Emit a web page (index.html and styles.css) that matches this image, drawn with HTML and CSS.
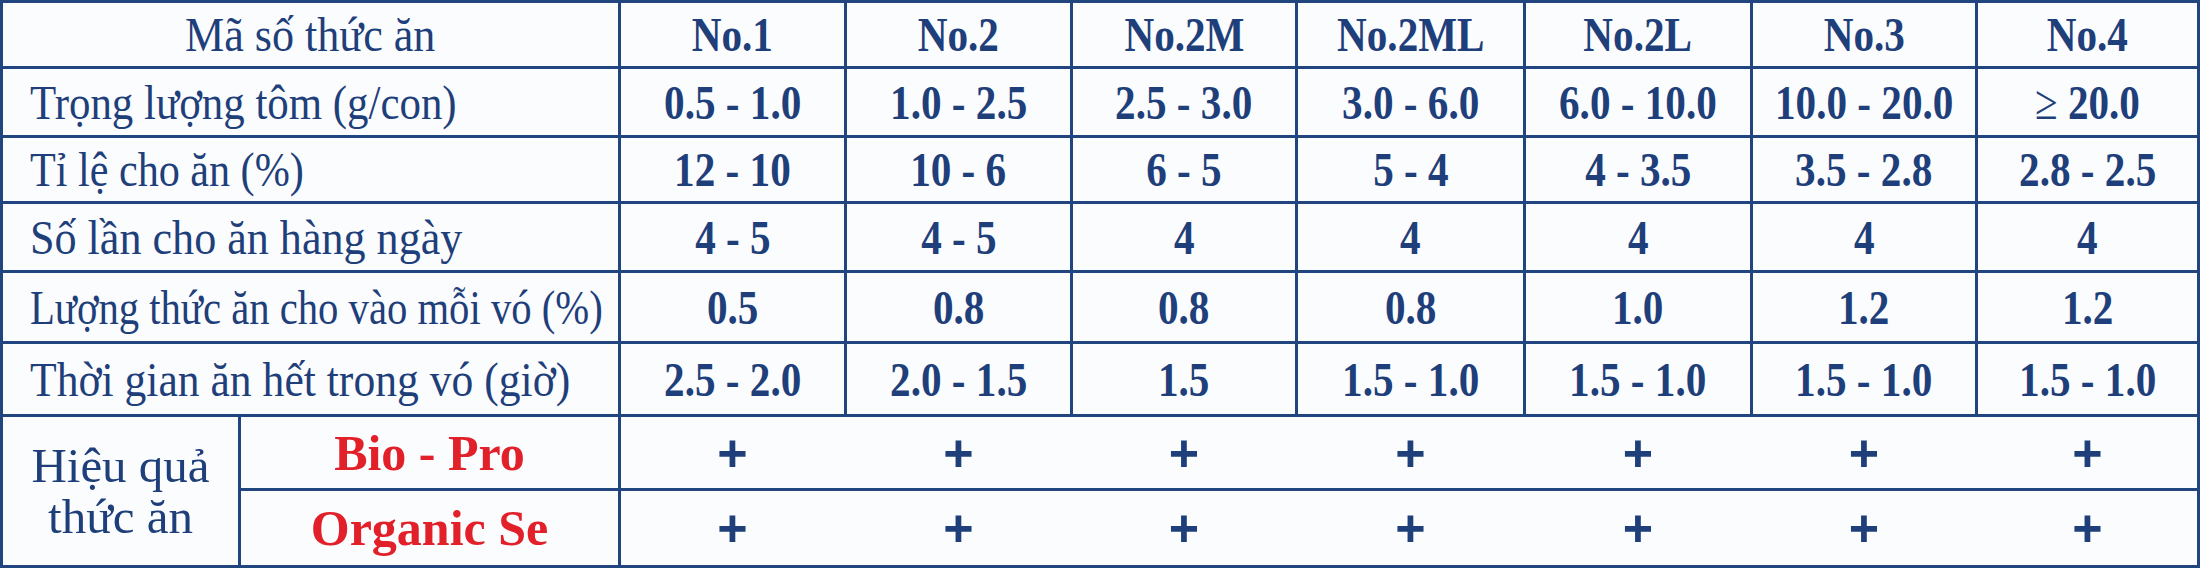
FILE: index.html
```html
<!DOCTYPE html>
<html lang="vi">
<head>
<meta charset="utf-8">
<title>Bảng cho ăn</title>
<link rel="stylesheet" href="styles.css">
</head>
<body>
<div class="feed-table">
  <div class="cell label head-label"><span class="sq s90">Mã số thức ăn</span></div>
  <div class="cell val"><span class="num">No.1</span></div>
  <div class="cell val"><span class="num">No.2</span></div>
  <div class="cell val"><span class="num">No.2M</span></div>
  <div class="cell val"><span class="num">No.2ML</span></div>
  <div class="cell val"><span class="num">No.2L</span></div>
  <div class="cell val"><span class="num">No.3</span></div>
  <div class="cell val"><span class="num">No.4</span></div>

  <div class="cell label"><span class="sq s87">Trọng lượng tôm (g/con)</span></div>
  <div class="cell val"><span class="num">0.5 - 1.0</span></div>
  <div class="cell val"><span class="num">1.0 - 2.5</span></div>
  <div class="cell val"><span class="num">2.5 - 3.0</span></div>
  <div class="cell val"><span class="num">3.0 - 6.0</span></div>
  <div class="cell val"><span class="num">6.0 - 10.0</span></div>
  <div class="cell val"><span class="num">10.0 - 20.0</span></div>
  <div class="cell val"><span class="num"><span class="ge">≥</span> 20.0</span></div>

  <div class="cell label"><span class="sq s86">Tỉ lệ cho ăn (%)</span></div>
  <div class="cell val"><span class="num">12 - 10</span></div>
  <div class="cell val"><span class="num">10 - 6</span></div>
  <div class="cell val"><span class="num">6 - 5</span></div>
  <div class="cell val"><span class="num">5 - 4</span></div>
  <div class="cell val"><span class="num">4 - 3.5</span></div>
  <div class="cell val"><span class="num">3.5 - 2.8</span></div>
  <div class="cell val"><span class="num">2.8 - 2.5</span></div>

  <div class="cell label"><span class="sq s90">Số lần cho ăn hàng ngày</span></div>
  <div class="cell val"><span class="num">4 - 5</span></div>
  <div class="cell val"><span class="num">4 - 5</span></div>
  <div class="cell val"><span class="num">4</span></div>
  <div class="cell val"><span class="num">4</span></div>
  <div class="cell val"><span class="num">4</span></div>
  <div class="cell val"><span class="num">4</span></div>
  <div class="cell val"><span class="num">4</span></div>

  <div class="cell label"><span class="sq s83">Lượng thức ăn cho vào mỗi vó (%)</span></div>
  <div class="cell val"><span class="num">0.5</span></div>
  <div class="cell val"><span class="num">0.8</span></div>
  <div class="cell val"><span class="num">0.8</span></div>
  <div class="cell val"><span class="num">0.8</span></div>
  <div class="cell val"><span class="num">1.0</span></div>
  <div class="cell val"><span class="num">1.2</span></div>
  <div class="cell val"><span class="num">1.2</span></div>

  <div class="cell label"><span class="sq s89">Thời gian ăn hết trong vó (giờ)</span></div>
  <div class="cell val"><span class="num">2.5 - 2.0</span></div>
  <div class="cell val"><span class="num">2.0 - 1.5</span></div>
  <div class="cell val"><span class="num">1.5</span></div>
  <div class="cell val"><span class="num">1.5 - 1.0</span></div>
  <div class="cell val"><span class="num">1.5 - 1.0</span></div>
  <div class="cell val"><span class="num">1.5 - 1.0</span></div>
  <div class="cell val"><span class="num">1.5 - 1.0</span></div>

  <div class="cell effect">Hiệu quả<br>thức ăn</div>
  <div class="cell brand">Bio - Pro</div>
  <div class="cell plus-row">
    <span class="plus">+</span><span class="plus">+</span><span class="plus">+</span><span class="plus">+</span><span class="plus">+</span><span class="plus">+</span><span class="plus">+</span>
  </div>
  <div class="cell brand">Organic Se</div>
  <div class="cell plus-row">
    <span class="plus">+</span><span class="plus">+</span><span class="plus">+</span><span class="plus">+</span><span class="plus">+</span><span class="plus">+</span><span class="plus">+</span>
  </div>
</div>
</body>
</html>
```

FILE: styles.css
```css
html, body {
  margin: 0;
  padding: 0;
  background: #fbfcfe;
  overflow: hidden;
}

.feed-table {
  box-sizing: border-box;
  width: 2200px;
  height: 568px;
  padding: 3px;
  display: grid;
  grid-template-columns: 235px 377px 223px 223px 222px 225px 224px 222px 219px;
  grid-template-rows: 63px 66px 63px 66px 68px 70px 71px 74px;
  gap: 3px;
  background: #21467f;
  font-family: "Liberation Serif", "Times New Roman", serif;
  font-size: 49px;
  color: #1f3f7a;
}

.cell {
  background: #fbfcfe;
  display: flex;
  align-items: center;
  white-space: nowrap;
  min-width: 0;
}

.label {
  grid-column: 1 / span 2;
  padding-left: 27px;
}

.head-label {
  justify-content: center;
  padding-left: 0;
}

.sq {
  display: inline-block;
  transform-origin: left center;
}

.head-label .sq {
  transform-origin: center center;
}

.s83 { transform: scaleX(0.83); }
.s86 { transform: scaleX(0.86); }
.s87 { transform: scaleX(0.875); }
.s89 { transform: scaleX(0.89); }
.s90 { transform: scaleX(0.90); }

.val {
  justify-content: center;
}

.num {
  display: inline-block;
  font-weight: bold;
  transform: scaleX(0.84);
  transform-origin: center center;
}

.ge {
  font-weight: normal;
}

.effect {
  grid-column: 1;
  grid-row: 7 / span 2;
  flex-direction: column;
  justify-content: center;
  line-height: 51px;
  text-align: center;
}

.brand {
  grid-column: 2;
  justify-content: center;
  color: #e2202a;
  font-weight: bold;
  font-size: 50px;
}

.plus-row {
  grid-column: 3 / span 7;
  display: grid;
  grid-template-columns: 223px 223px 222px 225px 224px 222px 219px;
  column-gap: 3px;
  align-items: center;
}

.plus {
  text-align: center;
  font-family: "Liberation Sans", Arial, sans-serif;
  font-weight: bold;
  font-size: 52px;
  line-height: 1;
  color: #1f3f7a;
}
```
